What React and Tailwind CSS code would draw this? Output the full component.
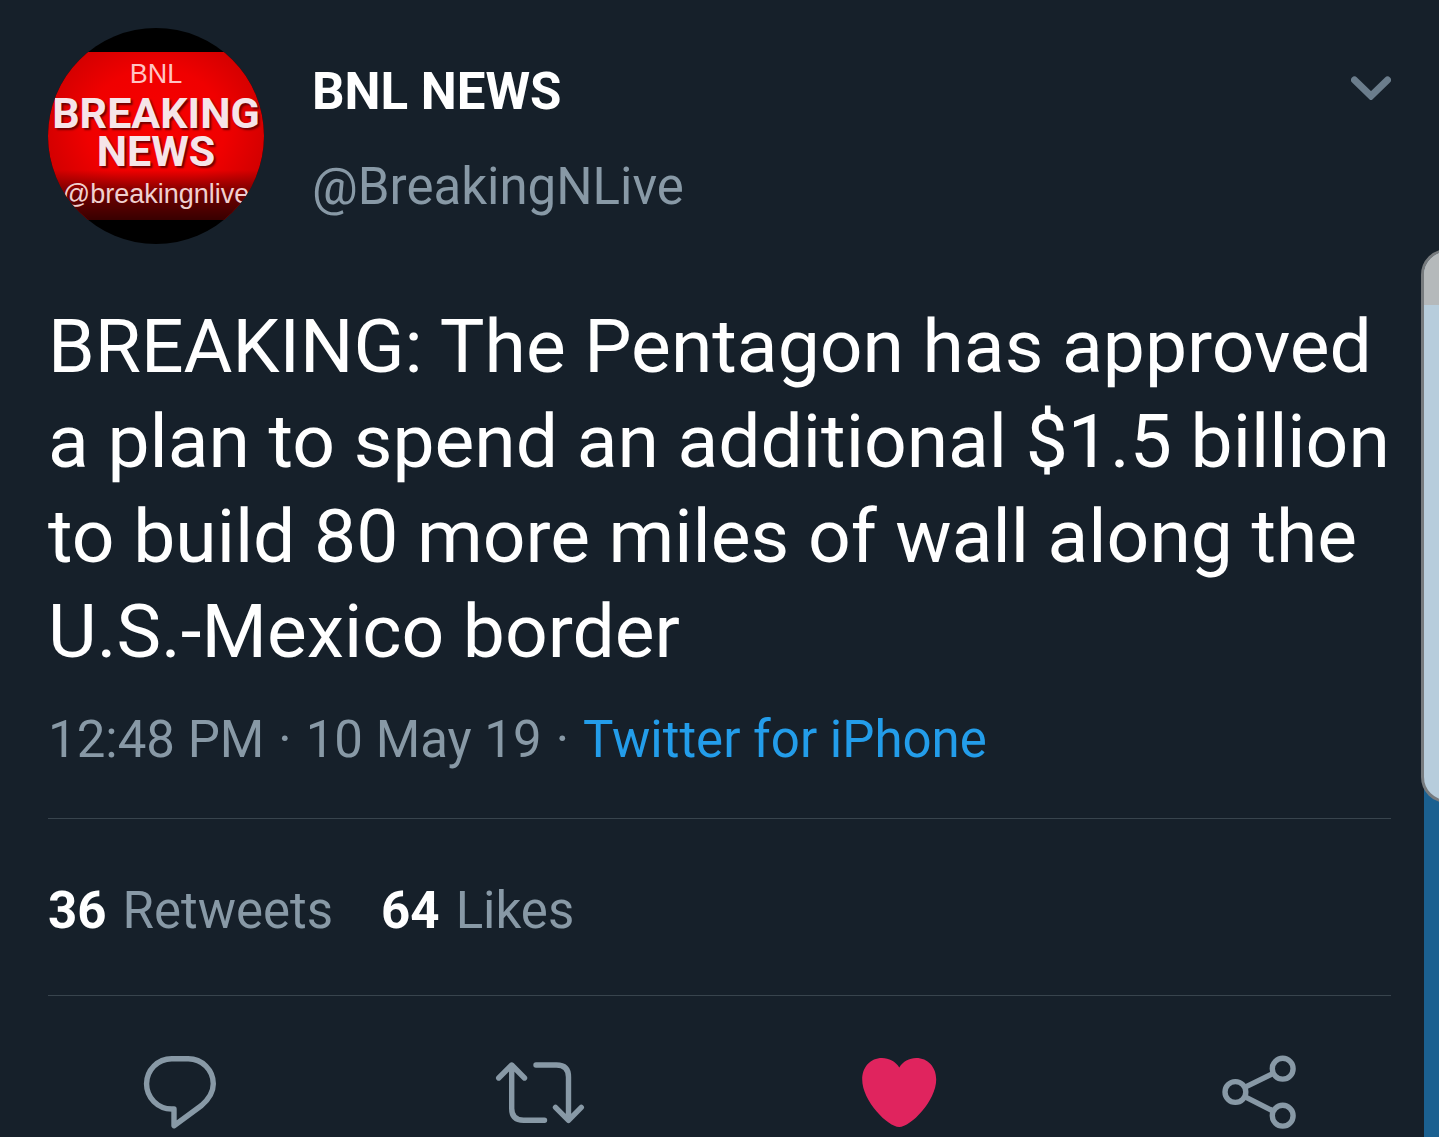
// App.jsx
//
// Tweet detail view (dark theme) with the phone's edge panel peeking in
// from the right side of the screen.

const tweet = {
  name: "BNL NEWS",
  handle: "@BreakingNLive",
  text: "BREAKING: The Pentagon has approved a plan to spend an additional $1.5 billion to build 80 more miles of wall along the U.S.-Mexico border",
  time: "12:48 PM",
  date: "10 May 19",
  source: "Twitter for iPhone",
};

const stats = [
  { count: 36, label: "Retweets" },
  { count: 64, label: "Likes" },
];

const actions = [
  { label: "Reply", Icon: ReplyIcon },
  { label: "Retweet", Icon: RetweetIcon },
  { label: "Like", Icon: HeartIcon },
  { label: "Share", Icon: ShareIcon },
];

export default function App() {
  return (
    <div className="relative min-h-screen overflow-hidden bg-[#16202a] font-['Roboto',sans-serif] text-white">
      <article className="px-12 pt-7">
        <header className="flex items-start">
          <Avatar />
          <div className="ml-12 flex-1 pt-[34px] text-[51px] leading-[60px]">
            <h1 className="font-bold">{tweet.name}</h1>
            <a href="#profile" className="mt-[35px] block text-[#8899a6]">
              {tweet.handle}
            </a>
          </div>
          <button type="button" aria-label="More options" className="mt-12">
            <ChevronIcon />
          </button>
        </header>

        <p className="mt-[55px] text-[75px] leading-[95px]">{tweet.text}</p>

        <p className="mt-[31px] flex flex-wrap gap-x-3.5 text-[51px] leading-[60px] text-[#8899a6]">
          <span>{tweet.time}</span>
          <span>·</span>
          <span>{tweet.date}</span>
          <span>·</span>
          <a href="#source" className="text-[#239dea]">
            {tweet.source}
          </a>
        </p>

        <div className="mt-12 flex gap-12 border-y border-[#38444d] pt-[62px] pb-[54px] text-[51px] leading-[60px]">
          {stats.map(({ count, label }) => (
            <a key={label} href="#stats" className="flex gap-4">
              <span className="font-bold">{count}</span>
              <span className="text-[#8899a6]">{label}</span>
            </a>
          ))}
        </div>
      </article>

      <div className="grid grid-cols-4 pt-11">
        {actions.map(({ label, Icon }) => (
          <button
            key={label}
            type="button"
            aria-label={label}
            className="flex justify-center text-[#8899a6]"
          >
            <Icon />
          </button>
        ))}
      </div>

      <EdgePanel />
    </div>
  );
}

function Avatar() {
  return (
    <div className="size-[216px] shrink-0 overflow-hidden rounded-full bg-black py-6 font-['Liberation_Sans',sans-serif]">
      <div className="flex h-[168px] flex-col items-center bg-[radial-gradient(ellipse_at_50%_45%,#f80000_0%,#f00000_45%,#b80000_100%)] whitespace-nowrap text-[#f6e4e8]">
        <span className="mt-2 text-[27px] leading-[28px] text-[#ffc4c4]">
          BNL
        </span>
        <span className="mt-1.5 font-['Roboto',sans-serif] text-[43px] leading-[38px] font-bold [text-shadow:2px_2px_2px_#700000]">
          BREAKING
        </span>
        <span className="font-['Roboto',sans-serif] text-[43px] leading-[38px] font-bold [text-shadow:2px_2px_2px_#700000]">
          NEWS
        </span>
        <span className="w-full flex-1 bg-linear-to-b from-transparent via-[#6c0000] to-[#380000] pt-2 text-center text-[27px] leading-[32px] text-[#f0d0d0]">
          @breakingnlive
        </span>
      </div>
    </div>
  );
}

// Sits over the page, mostly off screen
function EdgePanel() {
  return (
    <aside aria-hidden="true" className="absolute inset-y-0 right-0 w-[18px]">
      <div className="absolute top-[780px] right-0 bottom-0 w-[15px] bg-[#1b6090]" />
      <div className="absolute top-[249px] left-0 h-[554px] w-20 overflow-hidden rounded-[26px] border-3 border-[#777b7e] bg-[#b7cddc]">
        <div className="h-[53px] bg-[#b5b9bb]" />
      </div>
    </aside>
  );
}

function ChevronIcon() {
  return (
    <svg
      className="h-6 w-10"
      viewBox="0 0 40 24"
      fill="none"
      stroke="#6b7d8c"
      strokeWidth="7"
      strokeLinecap="round"
      aria-hidden="true"
    >
      <path d="M3.5 4 20 20 36.5 4" />
    </svg>
  );
}

function ReplyIcon() {
  return (
    <svg
      className="h-24 w-[120px]"
      viewBox="0 0 120 96"
      fill="none"
      stroke="currentColor"
      strokeWidth="5.4"
      strokeLinecap="round"
      strokeLinejoin="round"
      aria-hidden="true"
    >
      <path d="M51.700 18.700H68.200A25.100 25.100 0 0 1 93.300 43.800C93.300 52.500 88.500 59.500 81.500 65.500L54 85.700V69H51.700A25.150 25.150 0 0 1 51.700 18.700Z" />
    </svg>
  );
}

function RetweetIcon() {
  return (
    <svg
      className="h-24 w-[120px]"
      viewBox="0 0 120 96"
      fill="none"
      stroke="currentColor"
      strokeWidth="5.4"
      strokeLinecap="round"
      strokeLinejoin="round"
      aria-hidden="true"
    >
      <path d="M18.700 38 31.700 25 44.500 38M31.700 26V68.500Q31.700 80.300 43.500 80.300H64.500" />
      <path d="M56 25H76.500Q88.500 25 88.500 37V79M75.500 67.300 88.500 80.300 101.300 67.300" />
    </svg>
  );
}

function HeartIcon() {
  return (
    <svg
      className="h-24 w-[120px]"
      viewBox="0 0 120 96"
      fill="#e0245e"
      aria-hidden="true"
    >
      <path d="M60.300 27.500C56.500 21.500 50 18 43 18C31.500 18 23.200 27 23.200 39.500C23.200 61 49 87 60.300 87C71.500 87 97.200 61 97.200 39.500C97.200 27 88.700 18 77.200 18C70.200 18 64 21.500 60.300 27.500Z" />
    </svg>
  );
}

function ShareIcon() {
  return (
    <svg
      className="h-24 w-[120px]"
      viewBox="0 0 120 96"
      fill="none"
      stroke="currentColor"
      strokeWidth="5.4"
      aria-hidden="true"
    >
      <circle cx="36.400" cy="52" r="10.400" />
      <circle cx="83.700" cy="28.700" r="10.400" />
      <circle cx="83.700" cy="75.700" r="10.400" />
      <path d="M45.700 47.300 74.200 33.300M45.700 56.700 74.200 71" />
    </svg>
  );
}
